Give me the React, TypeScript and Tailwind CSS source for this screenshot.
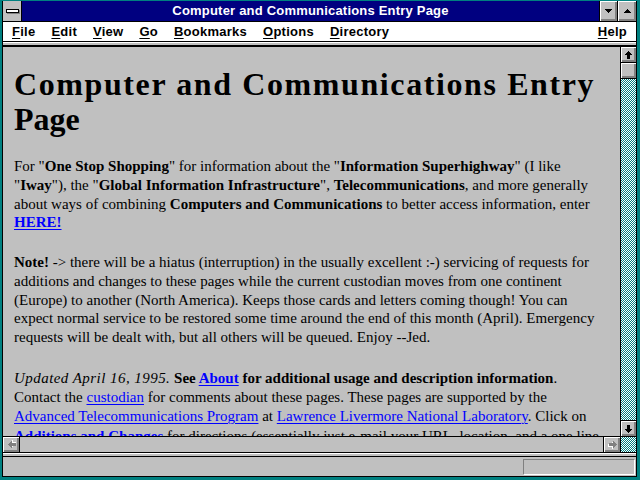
import React from "react";

const bevel =
  "bg-[#c0c0c0] shadow-[inset_1px_1px_0_#ffffff,inset_-1px_-1px_0_#808080,inset_-2px_-2px_0_#808080]";
const checker =
  "bg-[image:repeating-conic-gradient(#008080_0%_25%,#ffffff_0%_50%)] bg-[length:2px_2px]";

const ARROW = "M3 0h1v1h1v1h1v1h1v1h-2v4h-3v-4h-2v-1h1v-1h1v-1h1z";
const TRI = "M0 0h7v1h-1v1h-1v1h-1v1h-1v-1h-1v-1h-1v-1h-1z";

function Arrow({ rot, disabled }: { rot: number; disabled?: boolean }) {
  return (
    <svg
      width="9"
      height="9"
      viewBox="-1 -0.5 9 9"
      shapeRendering="crispEdges"
      style={{ transform: `rotate(${rot}deg)` }}
    >
      {disabled ? (
        <>
          <path d={ARROW} fill="#ffffff" transform="translate(1 1)" />
          <path d={ARROW} fill="#808080" />
        </>
      ) : (
        <path d={ARROW} fill="#000000" />
      )}
    </svg>
  );
}

function Tri({ up }: { up?: boolean }) {
  return (
    <svg
      width="7"
      height="4"
      viewBox="0 0 7 4"
      shapeRendering="crispEdges"
      className={up ? "rotate-180" : ""}
    >
      <path d={TRI} fill="#000000" />
    </svg>
  );
}

function Menu({ label }: { label: string }) {
  return (
    <span>
      <span className="underline underline-offset-[2px] decoration-[1px]">{label[0]}</span>
      {label.slice(1)}
    </span>
  );
}

const A = ({ children, bold }: { children: React.ReactNode; bold?: boolean }) => (
  <span className={`text-[#0000ff] underline decoration-[1px] underline-offset-[2px] ${bold ? "font-bold" : ""}`}>
    {children}
  </span>
);

export default function App() {
  return (
    <div className="w-[640px] h-[480px] bg-[#008080] pt-[1px] pl-[2px] pr-[3px] pb-[3px] overflow-hidden">
      <div className="w-full h-full flex flex-col border-l border-r border-b border-black bg-[#c0c0c0]">
        {/* Title bar */}
        <div className="h-[21px] flex border-b border-black shrink-0">
          <div className="w-[19px] border-r border-black bg-[#c0c0c0] flex items-center justify-center">
            <div className="w-[13px] h-[4px] bg-white border border-black shadow-[1px_1px_0_#808080]" />
          </div>
          <div
            className="flex-1 bg-[#000080] text-white font-bold text-[13px] tracking-[0.2px] flex items-center justify-center border-r border-black"
            style={{ fontFamily: '"Liberation Sans", Arial, sans-serif' }}
          >
            Computer and Communications Entry Page
          </div>
          <div className={`w-[18px] ${bevel} flex items-center justify-center border-r border-black`}>
            <Tri />
          </div>
          <div className={`w-[18px] ${bevel} flex items-center justify-center`}>
            <Tri up />
          </div>
        </div>

        {/* Menu bar */}
        <div
          className="h-[20px] shrink-0 bg-white border-b border-black flex items-center pl-[9px] pr-[9px] text-[13px] font-bold tracking-[0.25px] text-black"
          style={{ fontFamily: '"Liberation Sans", Arial, sans-serif' }}
        >
          <div className="flex gap-[16px]">
            <Menu label="File" />
            <Menu label="Edit" />
            <Menu label="View" />
            <Menu label="Go" />
            <Menu label="Bookmarks" />
            <Menu label="Options" />
            <Menu label="Directory" />
          </div>
          <div className="ml-auto">
            <Menu label="Help" />
          </div>
        </div>

        {/* collapsed toolbar strip */}
        <div className="h-[3px] shrink-0 bg-[#c0c0c0] border-t border-white" />
        <div className="h-[2px] shrink-0 bg-black" />

        {/* Content row */}
        <div className="h-[389px] shrink-0 flex">
          <div
            className="flex-1 overflow-hidden bg-[#c0c0c0] pl-[11px] text-black whitespace-nowrap"
            style={{ fontFamily: '"Liberation Serif", "Times New Roman", serif' }}
          >
            <h1 className="mt-[20px] text-[32px] leading-[35px] font-bold">
              <span className="tracking-[1.6px]">Computer and Communications Entry</span>
              <br />
              Page
            </h1>
            <p className="mt-[20px] text-[15px] leading-[18.75px]">
              For "<b>One Stop Shopping</b>" for information about the "<b>Information Superhighway</b>" (I like
              <br />"<b>Iway</b>"), the "<b>Global Information Infrastructure</b>", <b>Telecommunications</b>, and more generally
              <br />
              about ways of combining <b>Computers and Communications</b> to better access information, enter
              <br />
              <A bold>HERE!</A>
            </p>
            <p className="mt-[21px] text-[15px] leading-[18.75px]">
              <b>Note!</b> -&gt; there will be a hiatus (interruption) in the usually excellent :-) servicing of requests for
              <br />
              additions and changes to these pages while the current custodian moves from one continent
              <br />
              (Europe) to another (North America). Keeps those cards and letters coming though! You can
              <br />
              expect normal service to be restored some time around the end of this month (April). Emergency
              <br />
              requests will be dealt with, but all others will be queued. Enjoy --Jed.
            </p>
            <p className="mt-[22px] text-[15px] leading-[19.25px]">
              <i className="tracking-[0.45px]">Updated April 16, 1995.</i>{" "}
              <b>
                See <A bold>About</A> for additional usage and description information
              </b>
              .
              <br />
              Contact the <A>custodian</A> for comments about these pages. These pages are supported by the
              <br />
              <A>Advanced Telecommunications Program</A> at <A>Lawrence Livermore National Laboratory</A>. Click on
              <br />
              <A bold>Additions and Changes</A> for directions (essentially just e-mail your URL, location, and a one line
            </p>
          </div>
          {/* vertical scrollbar */}
          <div className="w-[16px] border-l border-black flex flex-col">
            <div className={`h-[16px] shrink-0 border-b border-black ${bevel} flex items-center justify-center`}>
              <Arrow rot={0} />
            </div>
            <div className={`h-[16px] shrink-0 border-b border-black ${bevel}`} />
            <div className={`flex-1 ${checker}`} />
            <div className={`h-[16px] shrink-0 border-t border-black ${bevel} flex items-center justify-center`}>
              <Arrow rot={180} />
            </div>
          </div>
        </div>

        {/* horizontal scrollbar */}
        <div className="h-[17px] shrink-0 flex border-t border-b border-black">
          <div className={`w-[17px] border-r border-black ${bevel} flex items-center justify-center`}>
            <Arrow rot={-90} disabled />
          </div>
          <div className="flex-1 bg-[#c0c0c0]" />
          <div className={`w-[17px] border-l border-black ${bevel} flex items-center justify-center`}>
            <Arrow rot={90} disabled />
          </div>
          <div className={`w-[16px] border-l border-black ${checker}`} />
        </div>

        {/* strip */}
        <div className="h-[4px] shrink-0 bg-[#c0c0c0] border-t border-white border-b border-b-black" />

        {/* status bar */}
        <div className="flex-1 bg-[#c0c0c0] flex items-center justify-end pr-[1px]">
          <div className="w-[112px] h-[16px] border-t border-l border-[#808080] border-b border-r border-b-white border-r-white" />
        </div>
      </div>
    </div>
  );
}
